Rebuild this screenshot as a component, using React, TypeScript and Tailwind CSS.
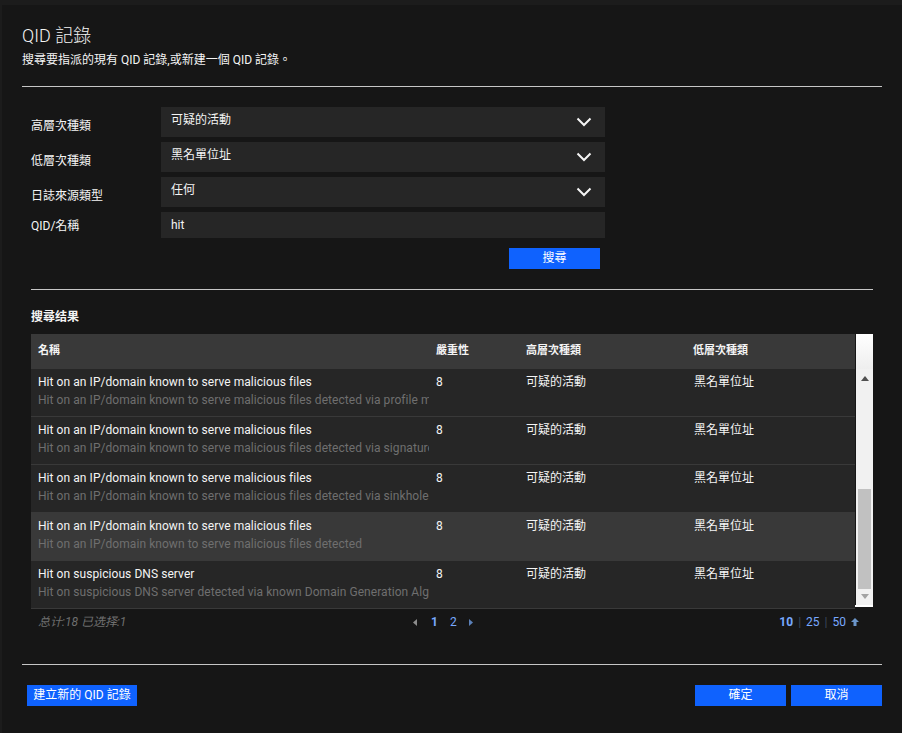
import React from 'react';

const cjk = 'Roboto,"Noto Sans CJK TC",sans-serif';

const filters = [
  { label: '高層次種類', value: '可疑的活動' },
  { label: '低層次種類', value: '黑名單位址' },
  { label: '日誌來源類型', value: '任何' },
];

const rows = [
  { name: 'Hit on an IP/domain known to serve malicious files', desc: 'Hit on an IP/domain known to serve malicious files detected via profile matching', hover: false },
  { name: 'Hit on an IP/domain known to serve malicious files', desc: 'Hit on an IP/domain known to serve malicious files detected via signature matching', hover: false },
  { name: 'Hit on an IP/domain known to serve malicious files', desc: 'Hit on an IP/domain known to serve malicious files detected via sinkhole', hover: false },
  { name: 'Hit on an IP/domain known to serve malicious files', desc: 'Hit on an IP/domain known to serve malicious files detected', hover: true },
  { name: 'Hit on suspicious DNS server', desc: 'Hit on suspicious DNS server detected via known Domain Generation Algorithm', hover: false },
];

function Chevron() {
  return (
    <svg width="16" height="10" viewBox="0 0 16 10" fill="none" className="mt-[10px]">
      <path d="M1.5 1.5 L8 8 L14.5 1.5" stroke="#f4f4f4" strokeWidth="2" />
    </svg>
  );
}

function BlueButton({ label, className }: { label: string; className: string }) {
  return (
    <button className={`h-[21px] bg-[#0f62fe] text-[12px] leading-[21px] text-white ${className}`}>
      {label}
    </button>
  );
}

export default function App() {
  return (
    <div className="h-[733px] w-[902px] overflow-hidden bg-[#1c1c1c] pt-[5px] pl-[2px] text-[12px] text-[#f4f4f4]" style={{ fontFamily: cjk }}>
      <div className="h-[728px] bg-[#161616] pl-[20px] pr-[20px]">
        {/* Header */}
        <div className="pt-[19px]">
          <h1 className="text-[18px] leading-[24px] font-light">QID 記錄</h1>
          <p className="mt-[4px] text-[12px] leading-[16px]">搜尋要指派的現有 QID 記錄,或新建一個 QID 記錄。</p>
        </div>
        <div className="mt-[18px] h-px bg-[#c6c6c6]" />

        {/* Search form */}
        <div className="mt-[20px] flex flex-col gap-[5px] pl-[9px]">
          {filters.map((f) => (
            <div key={f.label} className="flex h-[30px]">
              <label className="w-[130px] pt-[10px] leading-[18px]">{f.label}</label>
              <div className="flex h-[30px] w-[444px] justify-between bg-[#262626] pr-[13px] pl-[10px]">
                <span className="pt-[4px] leading-[18px]">{f.value}</span>
                <Chevron />
              </div>
            </div>
          ))}
          <div className="flex h-[26px]">
            <label className="w-[130px] pt-[5px] leading-[18px]">QID/名稱</label>
            <div className="h-[26px] w-[444px] bg-[#262626] pl-[10px] pt-[4px] leading-[18px]">hit</div>
          </div>
        </div>
        <div className="mt-[10px] flex pl-[487px]">
          <BlueButton label="搜尋" className="w-[91px]" />
        </div>

        <div className="mt-[20px] ml-[9px] w-[842px] h-px bg-[#c6c6c6]" />

        {/* Results */}
        <div className="ml-[9px] w-[842px]">
          <h2 className="mt-[19px] text-[12px] leading-[16px] font-bold">搜尋结果</h2>
          <div className="mt-[9px] flex h-[273px] border-b-2 border-white">
            <div className="w-[824px]">
              <div className="grid h-[35px] grid-cols-[398px_90px_167px_1fr] items-center bg-[#393939] text-[11px] font-bold">
                <span className="pl-[7px]">名稱</span>
                <span className="pl-[7px]">嚴重性</span>
                <span className="pl-[7px]">高層次種類</span>
                <span className="pl-[7px]">低層次種類</span>
              </div>
              {rows.map((r, i) => (
                <div
                  key={i}
                  className={`grid h-[48px] grid-cols-[398px_90px_167px_1fr] border-b border-[#393939] pt-[4px] ${r.hover ? 'bg-[#393939]' : 'bg-[#262626]'} ${i === 0 ? 'h-[45px]' : ''}`}
                >
                  <div className="overflow-hidden pl-[7px]">
                    <div className="leading-[18px] tracking-[0.06px] whitespace-nowrap">{r.name}</div>
                    <div className="leading-[18px] tracking-[0.06px] whitespace-nowrap text-[#6f6f6f]">{r.desc}</div>
                  </div>
                  <span className="pl-[7px] leading-[18px]">8</span>
                  <span className="pl-[7px] leading-[18px]">可疑的活動</span>
                  <span className="pl-[8px] leading-[18px]">黑名單位址</span>
                </div>
              ))}
            </div>
            {/* Scrollbar */}
            <div className="flex w-[18px] flex-col border-l border-[#161616] bg-[#f1f1f1]">
              <div className="h-[35px] bg-gradient-to-b from-white to-[#eeeeee]" />
              <div className="flex h-[120px] justify-center pt-[7px]">
                <svg width="8" height="5" viewBox="0 0 8 5"><path d="M4 0 L8 5 L0 5 Z" fill="#505050" /></svg>
              </div>
              <div className="mx-auto h-[100px] w-[13px] bg-[#c1c1c1]" />
              <div className="flex justify-center pt-[5px]">
                <svg width="8" height="5" viewBox="0 0 8 5"><path d="M0 0 L8 0 L4 5 Z" fill="#a3a3a3" /></svg>
              </div>
            </div>
          </div>

          {/* Pagination */}
          <div className="mt-[6px] flex h-[18px] items-center pl-[7px] pr-[14px] leading-[18px]">
            <span className="w-[375px] text-[#6f6f6f] italic">总计:18 已选择:1</span>
            <div className="flex items-center">
              <svg width="4" height="7" viewBox="0 0 4 7"><path d="M4 0 L4 7 L0 3.5 Z" fill="#8d8d8d" /></svg>
              <span className="ml-[14px] font-bold text-[#78a9ff]">1</span>
              <span className="ml-[12px] text-[#78a9ff]">2</span>
              <svg width="4" height="7" viewBox="0 0 4 7" className="ml-[12px]"><path d="M0 0 L4 3.5 L0 7 Z" fill="#5b80b8" /></svg>
            </div>
            <div className="ml-auto flex items-center gap-[5px]">
              <span className="font-bold text-[#78a9ff]">10</span>
              <span className="text-[#3d4a5c]">|</span>
              <span className="text-[#78a9ff]">25</span>
              <span className="text-[#3d4a5c]">|</span>
              <span className="text-[#78a9ff]">50</span>
              <svg width="8" height="8" viewBox="0 0 8 8"><path d="M4 0 L8 4 L5.5 4 L5.5 8 L2.5 8 L2.5 4 L0 4 Z" fill="#6b95c9" /></svg>
            </div>
          </div>
        </div>

        <div className="mt-[33px] h-px bg-[#c6c6c6]" />

        {/* Footer */}
        <div className="mt-[20px] flex gap-[5px]">
          <BlueButton label="建立新的 QID 記錄" className="ml-[5px] w-[110px]" />
          <BlueButton label="確定" className="ml-auto w-[91px]" />
          <BlueButton label="取消" className="w-[91px]" />
        </div>
      </div>
    </div>
  );
}
